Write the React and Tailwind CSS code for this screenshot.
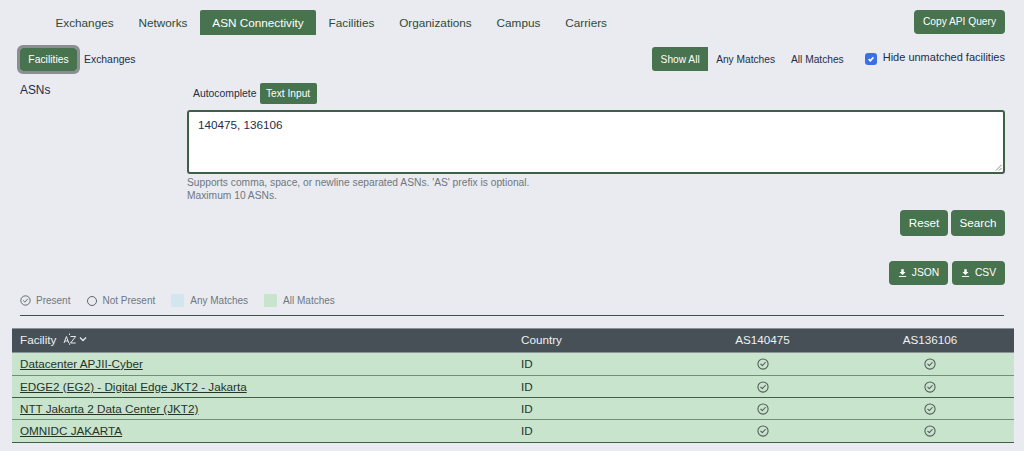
import React from "react";

const G = "bg-[#47734f] text-white";

function CheckCircle({ className = "" }) {
  return (
    <svg viewBox="0 0 16 16" className={className} fill="none" stroke="currentColor">
      <circle cx="8" cy="8" r="6.8" strokeWidth="1.4" />
      <path d="M5 8.3l2.1 2 3.9-4.3" strokeWidth="1.4" strokeLinecap="round" strokeLinejoin="round" />
    </svg>
  );
}

function Download() {
  return (
    <svg viewBox="0 0 10 10" className="w-[9px] h-[10px]" fill="white">
      <path d="M3.6 0.8h2.8v3.2h2L5 7.3 1.6 4h2z" />
      <rect x="1" y="8.4" width="8" height="1" />
    </svg>
  );
}

function Sort() {
  return (
    <span className="ml-[7px] flex items-center gap-[2px] text-[#e8eaec]">
      <svg viewBox="0 0 14 12" className="w-[14px] h-[12px]" fill="none" stroke="currentColor" strokeWidth="1">
        <path d="M1 10L3.4 3.5 5.8 10M1.8 8h3.2" />
        <path d="M7.5 3.5h5.2L7.5 10h5.2" />
        <path d="M6.5 0.6v1.4M6.5 10.4v1.4" />
      </svg>
      <svg viewBox="0 0 10 10" className="w-[8px] h-[8px]" fill="none" stroke="currentColor" strokeWidth="1.7">
        <path d="M1.2 3L5 6.8 8.8 3" />
      </svg>
    </span>
  );
}

const tabs = ["Exchanges", "Networks", "ASN Connectivity", "Facilities", "Organizations", "Campus", "Carriers"];
const rows = [
  ["Datacenter APJII-Cyber", "h-[23px] pb-[1px]", "border-[#6f8f76]"],
  ["EDGE2 (EG2) - Digital Edge JKT2 - Jakarta", "h-[22px]", "border-[#3f5f47]"],
  ["NTT Jakarta 2 Data Center (JKT2)", "h-[22px]", "border-[#6f8f76]"],
  ["OMNIDC JAKARTA", "h-[23px]", "border-[#3f5f47]"],
];

export default function App() {
  return (
    <div className="w-[1024px] h-[451px] overflow-hidden bg-[#e9ebf0] text-[#1d2d4a] font-['Liberation_Sans',Arial,sans-serif]">
      <div className="flex justify-between pt-[10px] pl-[43px] pr-[19px]">
        <nav className="flex text-[11.75px] text-[#2e4a38]">
          {tabs.map((t) => (
            <span
              key={t}
              className={`h-[25px] px-[12.45px] flex items-center rounded-t-[2px] ${t === "ASN Connectivity" ? G : ""}`}
            >
              {t}
            </span>
          ))}
        </nav>
        <button className={`${G} h-[24px] w-[91px] rounded-[4px] text-[10.2px]`}>Copy API Query</button>
      </div>

      <div className="flex justify-between items-start pl-[20px] pr-[19px] mt-[12px]">
        <div className="flex items-center mt-[1px]">
          <span className={`${G} h-[23px] w-[57px] flex items-center justify-center rounded-[3px] text-[10.4px] outline-[3px] outline-[#8b8f93]`}>
            Facilities
          </span>
          <span className="ml-[7px] text-[10.4px]">Exchanges</span>
        </div>
        <div className="flex items-start">
          <span className={`${G} h-[24px] w-[56px] pt-[1px] flex items-center justify-center rounded-l-[3px] text-[10.2px]`}>Show All</span>
          <span className="ml-[8px] h-[24px] pt-[1px] flex items-center text-[10.2px]">Any Matches</span>
          <span className="ml-[16px] h-[24px] pt-[1px] flex items-center text-[10.2px]">All Matches</span>
          <span className="ml-[21px] mt-[6px] w-[12px] h-[12px] rounded-[3px] bg-[#3b6fe8] flex items-center justify-center">
            <svg viewBox="0 0 10 10" className="w-[8px] h-[8px]" fill="none" stroke="white" strokeWidth="2">
              <path d="M2 5.2l2.1 2L8 3" />
            </svg>
          </span>
          <span className="ml-[6px] mt-[2px] text-[11px]">Hide unmatched facilities</span>
        </div>
      </div>

      <div className="flex pl-[20px] pr-[19px] mt-[12px]">
        <div className="w-[167px] text-[11.9px] -mt-[1px]">ASNs</div>
        <div className="flex-1">
          <div className="flex items-center pl-[6px] h-[21px] text-[10.4px]">
            <span>Autocomplete</span>
            <span className={`${G} ml-[3px] h-[21px] w-[57px] flex items-center justify-center rounded-[2px] text-[10.2px]`}>Text Input</span>
          </div>
          <div className="mt-[6px] h-[64px] bg-white border-2 border-[#3f5f47] rounded-[3px] px-[9px] py-[4px] text-[11.7px] relative">
            140475, 136106
            <svg viewBox="0 0 8 8" className="absolute right-[1px] bottom-[1px] w-[7px] h-[7px]" stroke="#555" strokeWidth="0.8">
              <path d="M1 7.5L7.5 1M4.5 7.5L7.5 4.5" />
            </svg>
          </div>
          <p className="mt-[2px] text-[10.24px] leading-[13px] text-[#6f7780]">
            Supports comma, space, or newline separated ASNs. 'AS' prefix is optional.
            <br />
            Maximum 10 ASNs.
          </p>
        </div>
      </div>

      <div className="flex justify-end gap-[3px] pr-[19px] mt-[8px]">
        <button className={`${G} w-[48px] h-[26px] rounded-[4px] text-[11.7px]`}>Reset</button>
        <button className={`${G} w-[54px] h-[26px] rounded-[4px] text-[11.7px]`}>Search</button>
      </div>

      <div className="flex justify-end gap-[4px] pr-[19px] mt-[25px]">
        <button className={`${G} w-[59px] h-[24px] rounded-[4px] text-[10.3px] flex items-center justify-center gap-[5px]`}>
          <Download /> JSON
        </button>
        <button className={`${G} w-[53px] h-[24px] rounded-[4px] text-[10.3px] flex items-center justify-center gap-[5px]`}>
          <Download /> CSV
        </button>
      </div>

      <div className="mx-[20px] mt-[6px] h-[19px] pb-[5px] flex items-center text-[10px] text-[#6f7780] box-content border-b border-[#3f5247]">
        <CheckCircle className="w-[11px] h-[11px] text-[#5d666d]" />
        <span className="ml-[5px]">Present</span>
        <span className="ml-[17px] w-[10px] h-[10px] rounded-full border border-[#5d666d]" />
        <span className="ml-[5px]">Not Present</span>
        <span className="ml-[16px] w-[13px] h-[13px] rounded-[1px] bg-[#d3e6ef]" />
        <span className="ml-[6px]">Any Matches</span>
        <span className="ml-[16px] w-[13px] h-[13px] rounded-[1px] bg-[#c8e4cc]" />
        <span className="ml-[6px]">All Matches</span>
      </div>

      <div className="ml-[12px] w-[1002px] mt-[12px] text-[11.7px]">
        <div className="grid grid-cols-[501px_166px_167px_168px] h-[25px] pb-[2px] items-center bg-[#475057] text-[#eef0f2] border-y border-[#8b9298]">
          <div className="pl-[8px] flex items-center">
            Facility <Sort />
          </div>
          <div className="pl-[8px]">Country</div>
          <div className="text-center">AS140475</div>
          <div className="text-center">AS136106</div>
        </div>
        {rows.map(([name, h, b]) => (
          <div key={name} className={`grid grid-cols-[501px_166px_167px_168px] ${h} items-center bg-[#c8e4cc] text-[#26332b] border-b ${b}`}>
            <div className="pl-[8px] underline">{name}</div>
            <div className="pl-[8px]">ID</div>
            <div className="flex justify-center">
              <CheckCircle className="w-[12px] h-[12px] text-[#4f5b57]" />
            </div>
            <div className="flex justify-center">
              <CheckCircle className="w-[12px] h-[12px] text-[#4f5b57]" />
            </div>
          </div>
        ))}
      </div>
    </div>
  );
}
